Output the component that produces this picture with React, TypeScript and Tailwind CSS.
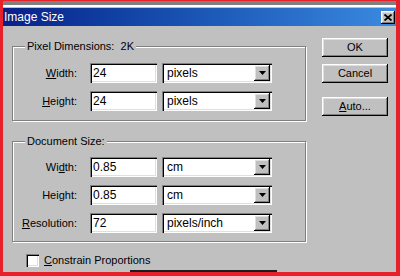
const sunken =
  "bg-white shadow-[inset_1px_1px_0_#808080,inset_2px_2px_0_#000,inset_-1px_-1px_0_#fff,inset_-2px_-2px_0_#dfdfdf]";
const raised =
  "bg-[#c0c0c0] shadow-[inset_-1px_-1px_0_#000,inset_1px_1px_0_#fff,inset_-2px_-2px_0_#808080,inset_2px_2px_0_#dfdfdf]";

function Row({ label, value, unit }: { label: React.ReactNode; value: string; unit: string }) {
  return (
    <div className="flex items-center h-[20px]">
      <div className="w-[64px] text-right text-[11px] leading-none">{label}</div>
      <div className={`ml-[13px] w-[67px] h-[20px] ${sunken} flex items-center px-[3px] text-[12px]`}>{value}</div>
      <div className={`ml-[5px] w-[110px] h-[20px] ${sunken} p-[2px] flex items-center`}>
        <span className="flex-1 pl-[3px] text-[12px]">{unit}</span>
        <div className={`w-[16px] h-[16px] ${raised} flex items-center justify-center`}>
          <svg width="7" height="4" viewBox="0 0 7 4">
            <polygon points="0,0 7,0 3.5,4" fill="#000" />
          </svg>
        </div>
      </div>
    </div>
  );
}

function Button({ children, className = "" }: { children: React.ReactNode; className?: string }) {
  return (
    <div className={`w-[66px] h-[19px] ${raised} flex items-center justify-center text-[11px] ${className}`}>
      {children}
    </div>
  );
}

export default function App() {
  return (
    <div className="w-[400px] h-[276px] bg-[#e8202a] pl-[3px] pr-[4px] pt-[1px] pb-[4px] font-['Liberation_Sans',Arial,sans-serif] text-black">
      <div className="flex flex-col h-full bg-[#c0c0c0]">
        <div className="h-[4px] shrink-0 bg-[#808080]" />
        <div className="h-[2px] shrink-0 bg-white" />
        <div className="h-[1px] shrink-0" />
        <div className="h-[18px] shrink-0 flex items-center justify-between bg-linear-to-r from-[#0a1f8a] to-[#3b8ae0]">
          <span className="pl-[1px] text-white text-[12px] leading-none">Image Size</span>
          <div className={`mr-[1px] w-[14px] h-[13px] ${raised} flex items-center justify-center`}>
            <svg width="8" height="7" viewBox="0 0 8 7">
              <path d="M0.5 0.5 L7.5 6.5 M7.5 0.5 L0.5 6.5" stroke="#000" strokeWidth="1.8" />
            </svg>
          </div>
        </div>
        <div className="flex flex-1 min-h-0">
          <div className="pl-[9px] w-[303px] shrink-0 flex flex-col">
            <fieldset className="mt-[13px] w-[294px] border border-[#808080] shadow-[inset_1px_1px_0_#fff,1px_1px_0_#fff] pt-[10px] pb-[9px]">
              <legend className="ml-[12px] px-[2px] text-[11px] leading-[14px] bg-[#c0c0c0]">
                Pixel Dimensions:{"\u00a0 "}2K
              </legend>
              <div className="flex flex-col gap-[8px]">
                <Row label={<><u>W</u>idth:</>} value="24" unit="pixels" />
                <Row label={<><u>H</u>eight:</>} value="24" unit="pixels" />
              </div>
            </fieldset>
            <fieldset className="mt-[13px] w-[294px] border border-[#808080] shadow-[inset_1px_1px_0_#fff,1px_1px_0_#fff] pt-[9px] pb-[8px]">
              <legend className="ml-[12px] px-[2px] text-[11px] leading-[14px] bg-[#c0c0c0]">Document Size:</legend>
              <div className="flex flex-col gap-[8px]">
                <Row label={<>Wi<u>d</u>th:</>} value="0.85" unit="cm" />
                <Row label={<>Hei<u>g</u>ht:</>} value="0.85" unit="cm" />
                <Row label={<><u>R</u>esolution:</>} value="72" unit="pixels/inch" />
              </div>
            </fieldset>
            <div className="mt-[12px] ml-[14px] flex items-center gap-[5px]">
              <div className={`w-[13px] h-[13px] ${sunken}`} />
              <span className="text-[11px] leading-none">
                <u>C</u>onstrain Proportions
              </span>
            </div>
          </div>
          <div className="ml-[16px] pt-[12px] flex flex-col">
            <Button>OK</Button>
            <Button className="mt-[7px]">Cancel</Button>
            <Button className="mt-[14px]">
              <span>
                <u>A</u>uto...
              </span>
            </Button>
          </div>
        </div>
        <div className="h-[2px] shrink-0 flex">
          <div className="ml-[127px] w-[147px] h-full bg-[#1c1c1c]" />
        </div>
      </div>
    </div>
  );
}
